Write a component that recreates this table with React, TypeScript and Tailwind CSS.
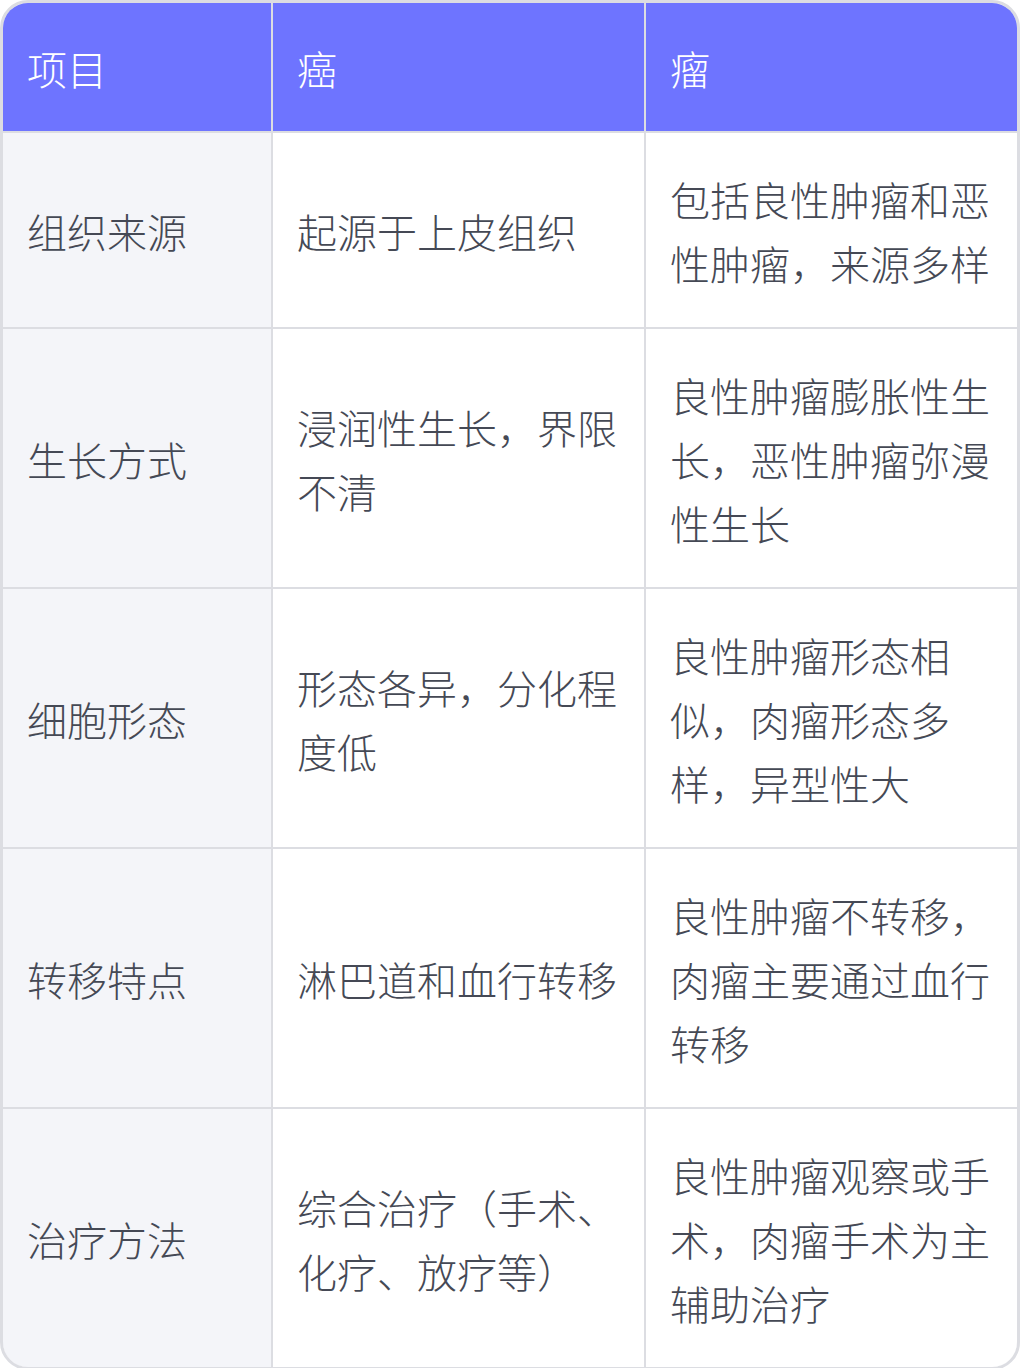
import React from "react";

const rows: [string, string, string][] = [
  ["组织来源", "起源于上皮组织", "包括良性肿瘤和恶性肿瘤，来源多样"],
  ["生长方式", "浸润性生长，界限不清", "良性肿瘤膨胀性生长，恶性肿瘤弥漫性生长"],
  ["细胞形态", "形态各异，分化程度低", "良性肿瘤形态相似，肉瘤形态多样，异型性大"],
  ["转移特点", "淋巴道和血行转移", "良性肿瘤不转移，肉瘤主要通过血行转移"],
  ["治疗方法", "综合治疗（手术、化疗、放疗等）", "良性肿瘤观察或手术，肉瘤手术为主辅助治疗"],
];

export default function App() {
  return (
    <div
      className="w-[1020px] bg-white"
      style={{ fontFamily: '"Noto Sans CJK SC", "Noto Sans", sans-serif' }}
    >
      <div className="border-[3px] border-[#dcdde2] rounded-[28px] overflow-hidden">
        <div className="grid grid-cols-[268px_1fr_1fr] gap-[2px] bg-[#dcdde2] text-[40px] leading-[64px] font-light">
          <div className="bg-[#6e74ff] text-white px-6 pt-[33px] pb-[31px]">项目</div>
          <div className="bg-[#6e74ff] text-white px-6 pt-[33px] pb-[31px]">癌</div>
          <div className="bg-[#6e74ff] text-white px-6 pt-[33px] pb-[31px]">瘤</div>
          {rows.map((r, i) => (
            <React.Fragment key={i}>
              <div className="bg-[#f4f5f9] text-[#454955] px-6 pt-[34px] pb-[32px] flex items-center">{r[0]}</div>
              <div className="bg-white text-[#454955] px-6 pt-[34px] pb-[32px] flex items-center">{r[1]}</div>
              <div className="bg-white text-[#454955] px-6 pt-[34px] pb-[32px] flex items-center">{r[2]}</div>
            </React.Fragment>
          ))}
        </div>
      </div>
    </div>
  );
}
